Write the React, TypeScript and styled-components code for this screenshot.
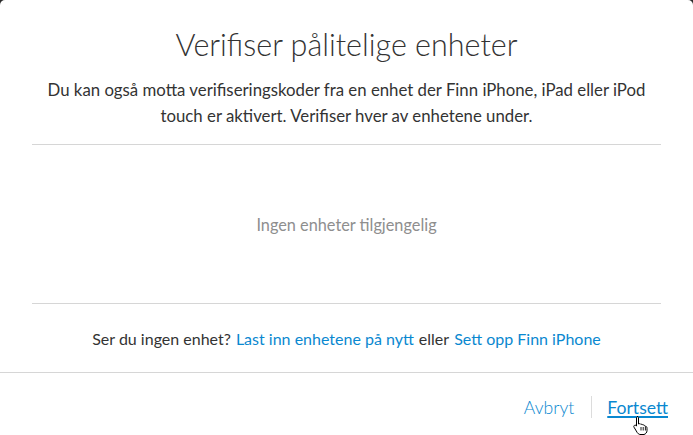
import styled, { createGlobalStyle } from "styled-components";

const GlobalStyle = createGlobalStyle`
  html, body {
    margin: 0;
    padding: 0;
    background: #2b2b2b;
  }
  body {
    font-family: Lato, "Liberation Sans", sans-serif;
    -webkit-font-smoothing: antialiased;
  }
`;

const Dialog = styled.div`
  position: relative;
  width: 693px;
  height: 435px;
  background: #fff;
  border-radius: 5px 5px 0 0;
  display: flex;
  flex-direction: column;
  overflow: hidden;
`;

const Body = styled.div`
  padding: 0 32px;
  display: flex;
  flex-direction: column;
`;

const Title = styled.h1`
  margin: 27px 0 0;
  font-size: 30.5px;
  line-height: 34px;
  font-weight: 300;
  color: #333;
  text-align: center;
`;

const Intro = styled.p`
  margin: 16px 0 0;
  font-size: 16.8px;
  line-height: 26px;
  color: #333;
  text-align: center;
  white-space: nowrap;
`;

const DeviceList = styled.div`
  margin-top: 15px;
  height: 158px;
  border-top: 1px solid #d6d6d6;
  border-bottom: 1px solid #d6d6d6;
  display: flex;
  align-items: center;
  justify-content: center;
`;

const Empty = styled.span`
  font-size: 16.3px;
  color: #8e8e8e;
`;

const Help = styled.div`
  height: 68px;
  display: flex;
  align-items: center;
  justify-content: center;
  font-size: 16px;
  color: #333;
  gap: 5px;
`;

const TextLink = styled.a`
  color: #0a88d0;
  text-decoration: none;
  cursor: pointer;
`;

const Footer = styled.div`
  flex: 1;
  border-top: 1px solid #d6d6d6;
  display: flex;
  align-items: center;
  justify-content: flex-end;
  padding: 6px 25px 0 0;
`;

const Action = styled.a<{ $active?: boolean }>`
  font-size: 17.6px;
  color: #0a88d0;
  font-weight: ${(p) => (p.$active ? 400 : 300)};
  text-decoration: ${(p) => (p.$active ? "underline" : "none")};
  text-underline-offset: 2px;
  text-decoration-thickness: 2px;
  cursor: pointer;
`;

const Separator = styled.span`
  width: 1px;
  height: 22px;
  background: #dcdcdc;
  margin: 0 15px 0 17px;
`;

const Cursor = styled.svg`
  position: absolute;
  left: 632px;
  top: 415px;
`;

export default function App() {
  return (
    <>
      <GlobalStyle />
      <Dialog>
        <Body>
          <Title>Verifiser pålitelige enheter</Title>
          <Intro>
            Du kan også motta verifiseringskoder fra en enhet der Finn iPhone, iPad eller iPod
            <br />
            touch er aktivert. Verifiser hver av enhetene under.
          </Intro>
          <DeviceList>
            <Empty>Ingen enheter tilgjengelig</Empty>
          </DeviceList>
          <Help>
            <span>Ser du ingen enhet?</span>
            <TextLink>Last inn enhetene på nytt</TextLink>
            <span>eller</span>
            <TextLink>Sett opp Finn iPhone</TextLink>
          </Help>
        </Body>
        <Footer>
          <Action>Avbryt</Action>
          <Separator />
          <Action $active>Fortsett</Action>
        </Footer>
        <Cursor width="18" height="20" viewBox="0 0 18 20">
          <path
            d="M5 1.5c.8 0 1.5.7 1.5 1.5v6l.5-.2c.7-.3 1.6 0 2 .6.6-.3 1.5-.1 1.9.6.7-.3 1.6.1 1.9.8l.3.6c.4-.2 1-.1 1.4.3.4.4.5 1 .5 1.6v2.2c0 1.9-1.3 3.6-3 4H7.8c-1.1-.3-2-1-2.6-2L2 12.2c-.4-.6-.2-1.4.4-1.8.6-.4 1.3-.3 1.7.2l.4.5V3c0-.8.7-1.5 1.5-1.5z"
            fill="#fff"
            stroke="#000"
            strokeWidth="1"
          />
          <path d="M9 12v3.5M11.2 12v3.5M13.4 12v3.5" stroke="#000" strokeWidth="0.9" />
        </Cursor>
      </Dialog>
    </>
  );
}
